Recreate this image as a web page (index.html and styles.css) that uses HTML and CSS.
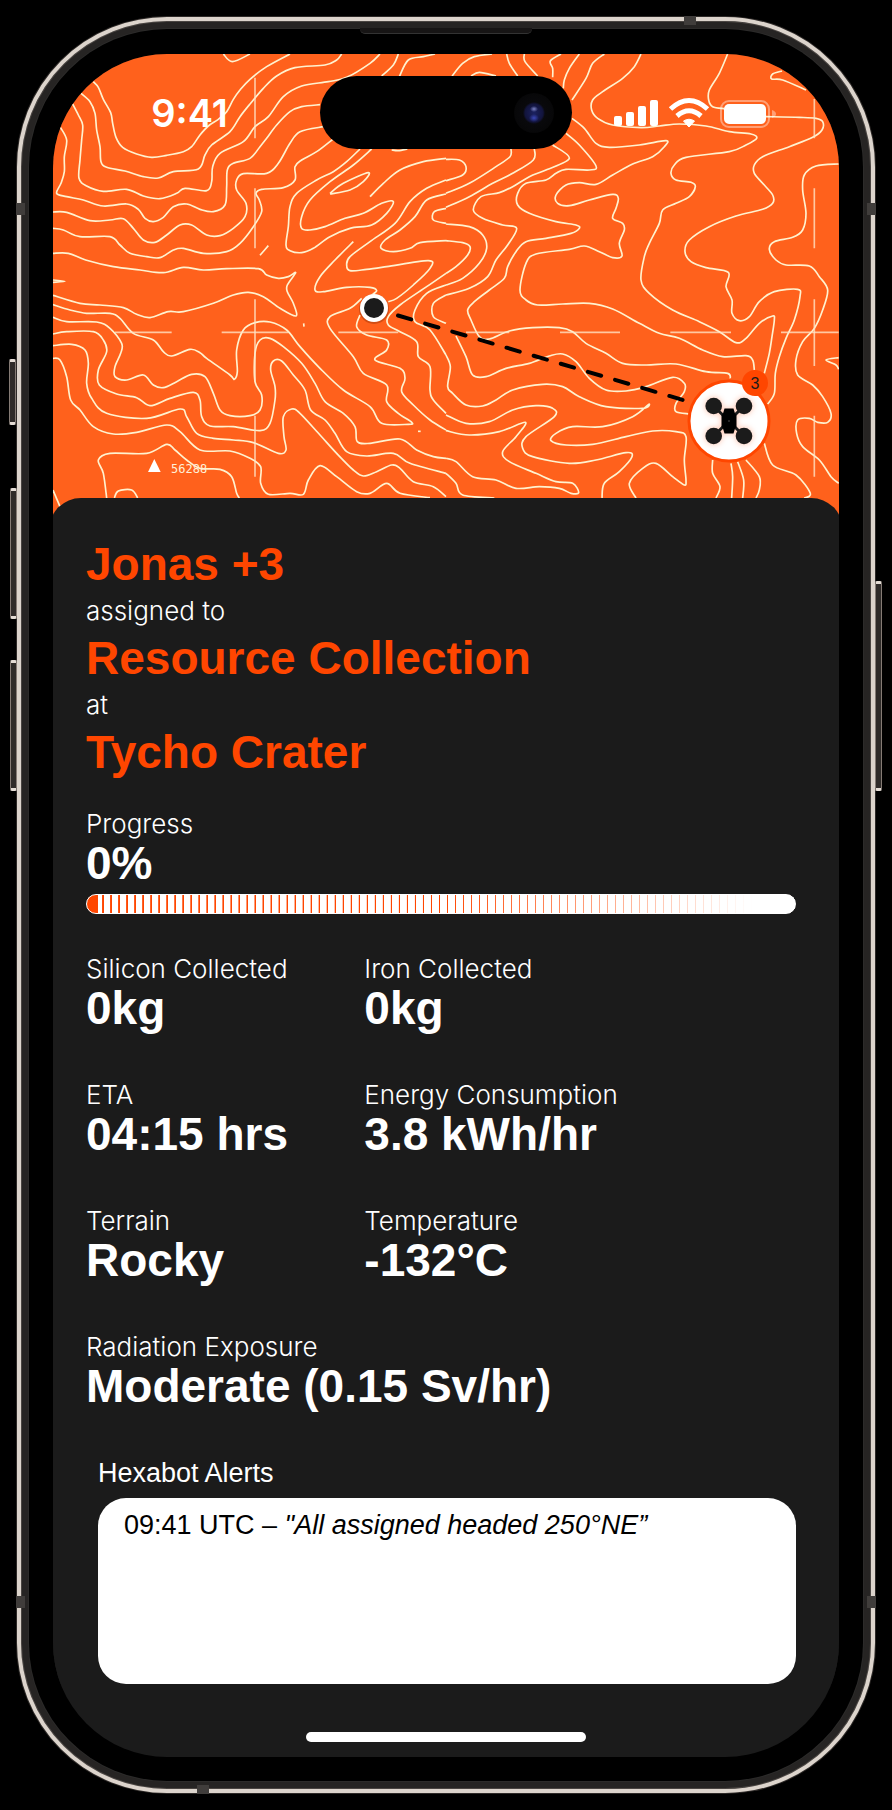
FILE: index.html
```html
<!DOCTYPE html>
<html lang="en">
<head>
<meta charset="utf-8">
<meta name="viewport" content="width=device-width, initial-scale=1">
<title>Hexabot mission</title>
<link rel="stylesheet" href="styles.css">
</head>
<body>
<div class="phone">
  <span class="key key-action"></span>
  <span class="key key-up"></span>
  <span class="key key-down"></span>
  <span class="key key-power"></span>
  <span class="seam seam-left-top"></span>
  <span class="seam seam-left-bottom"></span>
  <span class="seam seam-right-top"></span>
  <span class="seam seam-right-bottom"></span>
  <span class="seam seam-top"></span>
  <span class="seam seam-bottom"></span>
  <span class="speaker"></span>
  <div class="bezel">
    <main class="screen">
      <header class="status">
        <time class="clock">9:41</time>
        <div class="island"><span class="camera"></span></div>
        <svg class="signals" viewBox="613 96 164 34" role="img" aria-label="Signal, Wi-Fi and battery">
          <g fill="#fff">
            <rect x="614" y="116" width="8" height="10" rx="2"/>
            <rect x="626" y="112" width="8" height="14" rx="2"/>
            <rect x="638" y="106" width="8" height="20" rx="2"/>
            <rect x="650" y="100" width="8" height="26" rx="2"/>
            <path d="M689 127l-5.500-6q5.500-3.500 11 0z" stroke="#fff" stroke-linejoin="round"/>
            <rect x="724" y="104" width="42" height="20" rx="5"/>
          </g>
          <g fill="none" stroke="#fff" stroke-width="5">
            <path d="M670.500 109q18.500-17 37 0"/>
            <path d="M677 116q12-10.500 24 0"/>
          </g>
          <rect x="721" y="101" width="48" height="26" rx="8" fill="none" stroke="#fff" stroke-opacity=".4" stroke-width="2"/>
          <path d="M772 110q4 1.500 4 4t-4 4z" fill="#fff" fill-opacity=".4"/>
        </svg>
      </header>

      <svg class="map" viewBox="53 54 786 472" preserveAspectRatio="xMidYMin slice" role="img" aria-label="Contour map with route">
        <rect x="53" y="54" width="786" height="472" fill="#ff611c"/>
        <g id="contours" class="contours" transform="scale(.33333)"></g>
        <g class="grid" transform="scale(.33333)">
          <path d="M765 233V415M765 565V745M765 898V1145M765 1247V1430M2443 297V415M2443 565V745M2443 898V1098M2443 1247V1430"/>
          <path d="M345 997H515M665 997H865M1015 997H1195M1398 997H1528M1680 997H1860M2011 997H2193M2343 997H2516"/>
        </g>
        <path d="M154.300 459l6.400 13h-12.700z" fill="#fff"/>
        <text x="171" y="473" class="spot">56288</text>
        <path d="M398 315.500L683 400" stroke="#000" stroke-width="4" stroke-linecap="round" stroke-dasharray="13.800 14.500" fill="none"/>
        <circle cx="374" cy="309" r="15" fill="#a33a0c" opacity=".5"/>
        <circle cx="374" cy="308" r="14" fill="#fff"/>
        <circle cx="374" cy="308" r="10" fill="#1b1b1b"/>
        <circle cx="729" cy="421" r="40" fill="#fff" stroke="#ff4600" stroke-width="3"/>
        <g class="drone">
          <path d="M713.700 406L744 436M744 406L713.700 436" stroke="#1b1b1b" stroke-width="3"/>
          <g fill="#1b1b1b">
            <circle cx="713.700" cy="406" r="8.300"/><circle cx="744" cy="406" r="8.300"/>
            <circle cx="713.700" cy="436" r="8.300"/><circle cx="744" cy="436" r="8.300"/>
          </g>
          <path d="M724.500 408.500h9l1.500 5 1.500 2v11l-1.500 2-1.500 5h-9l-1.500-5-1.500-2v-11l1.500-2z" fill="#000"/>
          <circle cx="729" cy="421" r="1" fill="#333"/>
        </g>
        <circle cx="755" cy="383" r="13" fill="#ff4600"/>
        <text x="755" y="389" class="badge">3</text>
      </svg>

      <section class="panel">
        <h1 class="task">
          <span class="strong">Jonas +3</span>
          <span class="light">assigned to</span>
          <span class="strong">Resource Collection</span>
          <span class="light">at</span>
          <span class="strong">Tycho Crater</span>
        </h1>
        <div class="progress">
          <label class="label" for="progress">Progress</label>
          <output class="value" for="progress">0%</output>
          <progress id="progress" class="bar" value="0" max="100"></progress>
        </div>
        <dl class="metrics">
          <div><dt class="label">Silicon Collected</dt><dd class="value">0kg</dd></div>
          <div><dt class="label">Iron Collected</dt><dd class="value">0kg</dd></div>
          <div><dt class="label">ETA</dt><dd class="value">04:15 hrs</dd></div>
          <div><dt class="label">Energy Consumption</dt><dd class="value">3.8 kWh/hr</dd></div>
          <div><dt class="label">Terrain</dt><dd class="value">Rocky</dd></div>
          <div><dt class="label">Temperature</dt><dd class="value">-132°C</dd></div>
          <div class="wide"><dt class="label">Radiation Exposure</dt><dd class="value">Moderate (0.15 Sv/hr)</dd></div>
        </dl>
        <section class="alerts">
          <h2 class="alerts-title">Hexabot Alerts</h2>
          <div class="alerts-box">
            <p class="alert">09:41 UTC – <em>"All assigned headed 250°NE”</em></p>
          </div>
        </section>
      </section>
      <div class="home"></div>
    </main>
  </div>
</div>
<script src="map.js"></script>
</body>
</html>
```
FILE: styles.css
```css
* { box-sizing: border-box; margin: 0; padding: 0; }

body {
  min-height: 100vh;
  padding: 17px;
  background: #000;
  color: #fff;
  font-family: "Liberation Sans", Arial, sans-serif;
}

.phone {
  position: relative;
  border: 4px solid #dcd4cc;
  border-radius: 150px;
  background: #262423;
  padding: 8px;
  box-shadow: 0 0 0 1px #2e2a28, inset 0 0 0 1px #4a4542;
}
.bezel {
  border-radius: 138px;
  background: #000;
  padding: 25px 24px 24px;
  box-shadow: 0 0 0 1px #2c2b2a;
}
.screen {
  position: relative;
  overflow: hidden;
  border-radius: 114px;
  background: #1b1b1b;
}

.key {
  position: absolute;
  width: 7px;
  border: 1px solid #857b75;
  border-top: 3px solid #e4dcd5;
  border-bottom: 3px solid #e4dcd5;
  border-radius: 2px;
  background: #2f2b29;
}
.key-action { left: -12px; top: 338px; height: 66px; }
.key-up { left: -11px; top: 467px; height: 131px; }
.key-down { left: -11px; top: 639px; height: 131px; }
.key-power { right: -11px; top: 560px; height: 210px; }

.seam { position: absolute; background: #403d3b; }
.seam-left-top, .seam-left-bottom, .seam-right-top, .seam-right-bottom { width: 9px; height: 12px; }
.seam-left-top, .seam-left-bottom { left: -5px; }
.seam-right-top, .seam-right-bottom { right: -5px; }
.seam-left-top, .seam-right-top { top: 182px; }
.seam-left-bottom, .seam-right-bottom { bottom: 181px; }
.seam-top, .seam-bottom { width: 12px; height: 9px; }
.seam-top { top: -5px; right: 175px; }
.seam-bottom { bottom: -5px; left: 176px; }
.speaker {
  position: absolute;
  z-index: 1;
  top: 7px;
  left: 50%;
  width: 172px;
  height: 6px;
  margin-left: -86px;
  border-bottom: 1px solid #333;
  border-radius: 0 0 5px 5px;
  background: #171515;
}

.status {
  position: absolute;
  z-index: 1;
  top: 22px;
  left: 0;
  right: 0;
  display: grid;
  grid-template-columns: 1fr 252px 1fr;
  align-items: center;
}
.clock {
  justify-self: center;
  padding-left: 6px;
  font: 600 38px/44px Inter, sans-serif;
}
.island {
  display: flex;
  align-items: center;
  justify-content: flex-end;
  height: 73px;
  padding-right: 18px;
  border-radius: 37px;
  background: #000;
}
.camera {
  width: 40px;
  height: 40px;
  border-radius: 50%;
  background:
    radial-gradient(ellipse 4px 3px at 20px 16px, #7c83c4, transparent),
    radial-gradient(ellipse 5px 4px at 20px 25px, #3a46b8, transparent),
    radial-gradient(circle at 50% 50%, #1b2160 0, #12143c 9px, #09090c 11px, #070708 20px);
}
.signals { justify-self: start; width: 164px; height: 34px; margin-left: 41px; }

.map { display: block; width: 100%; height: 472px; }
.contours { fill: none; stroke: #fff2cf; stroke-width: 5; stroke-linejoin: round; }
.grid { fill: none; stroke: #ffe2c4; stroke-width: 5; stroke-opacity: .8; }
.spot { font: 12px "DejaVu Sans Mono", monospace; fill: #fff0d8; }
.badge { font: 16px "Liberation Sans", sans-serif; fill: #1b1b1b; text-anchor: middle; }
.drone { filter: drop-shadow(0 0 3px rgba(255, 70, 0, .35)); }

.panel {
  position: relative;
  margin: -28px -4px 0;
  padding: 39px 47px 0 37px;
  border-radius: 32px 32px 0 0;
  background: #1b1b1b;
}
.task { display: flex; flex-direction: column; font-size: 46px; }
.strong { color: #ff4600; font-size: 46px; line-height: 54px; }
.light { font: 300 26px/40px Inter, sans-serif; }
.label { display: block; font: 300 26px/38px Inter, sans-serif; }
.value { display: block; font-size: 46px; font-weight: 700; line-height: 40px; }

.progress { display: flex; flex-direction: column; padding-top: 26px; }
.bar {
  appearance: none;
  display: block;
  width: 100%;
  height: 20px;
  margin-top: 11px;
  border: 1px solid #fff;
  border-radius: 10px;
  background:
    linear-gradient(90deg, #ff4600 11px, #fff 11px 14px, transparent 14px),
    linear-gradient(90deg, transparent 50%, #fff 94%),
    repeating-linear-gradient(90deg, #ff4600 0 1px, transparent 1px 8px),
    linear-gradient(90deg, transparent, #fff 50%),
    repeating-linear-gradient(90deg, #fff 0 7px, #ff4600 7px 8px);
}
.bar::-webkit-progress-bar, .bar::-webkit-progress-value { background: transparent; }

.metrics {
  display: grid;
  grid-template-columns: 49fr 76fr;
  row-gap: 48px;
  margin-top: 36px;
}
.wide { grid-column: 1 / -1; }

.alerts { padding: 49px 0 0 12px; }
.alerts-title { font-size: 27px; font-weight: 400; line-height: 36px; }
.alerts-box {
  min-height: 186px;
  margin-top: 7px;
  padding: 9px 26px;
  border-radius: 28px;
  background: #fff;
  color: #000;
}
.alert { font-size: 27px; line-height: 36px; }

.home {
  width: 280px;
  height: 10px;
  margin: 48px auto 15px;
  border-radius: 5px;
  background: #fff;
}
```
FILE: map.js
```js
// Contour points, grouped by map tile. Each tile has its origin on the map.
const tiles = [
  { origin: [0, 0], lines: [
    "670,162 697,185 750,162",
    "280,245 295,262 310,298 332,338 338,370 348,412 368,442 410,462 455,472 500,466 550,455 575,440 600,405 625,378 655,358 680,335 700,298 720,270 750,238 800,200 870,162",
    "243,280 270,305 285,340 290,390 300,440 303,485 320,502 375,513 430,530 475,534 520,515 595,507 615,465 635,435 690,395 720,350 750,312 790,265 830,228 885,203 975,195 1010,180 1025,162",
    "218,312 235,345 248,375 245,420 240,480 237,535 260,558 310,574 380,568 430,588 480,596 530,580 555,565 620,572 635,545 638,500 660,460 730,425 765,380 805,350 850,290 905,258 985,245 1040,232 1110,190 1140,162",
    "181,382 200,420 193,470 193,515 183,550 170,580 200,590 250,600 310,618 380,612 415,628 435,655 460,665 490,652 520,620 560,612 600,628 640,635 675,615 680,560 682,510 700,490 750,475 780,440 800,415 830,375 870,335 905,320 960,314",
    "159,636 200,637 270,662 330,660 370,656 400,685 430,720 465,727 500,705 540,675 575,675 620,705 660,707 700,685 735,650 738,610 710,570 710,540 730,521 800,520 835,490 870,430 900,395 970,380",
    "159,685 190,690 240,710 330,710 360,735 390,760 440,770 480,773 520,750 550,745 610,760 680,755 720,730 760,680 785,635 778,600 768,580 785,568 850,563 885,540 885,500 905,480 950,455 998,418",
    "780,766 805,737",
    "1080,447 1040,485 1000,515 950,540 890,580 870,620 865,680 858,735 870,752 905,758 940,745 990,710 1050,685 1115,675 1160,640 1180,605 1145,610 1090,640 1035,655 975,680 930,690 905,685 905,650 930,600 990,545 1060,495 1115,447",
    "990,580 1030,550 1105,518 1090,545 1050,570 990,582",
    "1145,228 1180,195 1195,162", "1198,230 1225,180 1270,170 1305,162",
    "1338,475 1270,485 1200,510 1150,550 1110,590",
    "1338,540 1280,565 1230,605 1185,670 1110,725 1050,770 1040,795 1050,812 1100,808 1160,800 1285,782 1290,805 1240,855 1190,895 1165,905",
    "1338,582 1280,600 1245,650 1200,690 1155,720 1143,745 1180,755 1230,745 1260,728 1338,722",
    "1338,625 1303,635 1300,660 1338,670", "1175,450 1195,452 1222,447"
  ] },
  { origin: [1338, 0], lines: [
    "18,228 50,190 85,170 138,162", "75,228 100,217 150,228", "182,162 190,190 215,228",
    "235,162 237,185 275,228", "345,162 313,183 320,205 320,232", "400,162 370,205 355,240 352,265",
    "475,162 440,190 420,235 378,300",
    "585,162 565,200 530,235 470,275 440,300 437,330 455,355 500,375 585,383 640,378 700,372 780,378 850,395 915,402 932,415 900,435 850,455 720,472 685,495 675,520 690,540 735,547 748,560 730,590 690,610 650,630 640,670 610,730 595,770 585,840 610,880 680,930 760,965 820,995 870,1028 900,1015 940,970 980,948 985,960 978,1010 970,1060 955,1120",
    "845,162 820,220 790,270 788,300 800,320 835,326",
    "960,350 1060,352 1110,355 1130,365 1128,390 1100,412 1030,440 950,470 925,495 925,520 950,550 980,585 980,610 950,628 870,648 790,680 730,720 717,755 735,785 780,803 847,817 840,860 858,900 858,940 880,962 910,950 940,905 985,875 1055,868 1062,890 1045,960 1020,1015 1000,1070 988,1120 985,1180 965,1212",
    "1008,213 980,222 977,237 1010,240 1080,270",
    "1178,492 1110,498 1075,525 1070,570 1080,640 1070,690 1040,712 985,725 970,748 990,780 1020,795 1090,798 1120,830 1145,870 1130,930 1105,985 1070,1025 1050,1080 1055,1125 1100,1155 1130,1190 1155,1240 1145,1267 1115,1267 1090,1255 1055,1260 1052,1300 1070,1340 1120,1380 1155,1430 1178,1450",
    "378,355 415,385 450,430 490,442 580,435 660,422 655,440 620,470 560,492 500,525 450,553 400,548 360,555 330,585 335,610 370,617 430,600 500,583 517,595 510,625 500,655 530,670 535,690 520,730 528,768 500,773 460,755 415,738 370,748 270,762 240,790 222,870 240,900 275,915 350,912 430,910 500,927 580,970 640,1000 700,1015 770,1050 830,1070 900,1067 920,1080 925,1110",
    "360,400 400,435 450,498 430,510 360,508 330,520 300,540 240,550 215,580 215,615 250,640 330,665 390,675 400,685 375,700 300,715 240,725 210,755 185,800 175,835 130,870 85,905 65,930 75,960 100,1010 130,1017 190,993 260,983 340,983 380,995 420,1030 480,1060 530,1090 600,1095 690,1092 780,1115 845,1120 853,1135",
    "320,435 370,475 300,510 250,530 200,560 160,578 105,590 82,630 110,655 170,675 212,685 185,735 150,780 125,830 70,865 0,885",
    "265,447 262,480 200,520 140,550 70,590 0,622", "0,672 70,680 110,705 122,745 100,790 50,835 0,855",
    "195,447 192,470 150,500 70,550 0,580", "0,722 50,728 72,740 65,765 30,800 0,820", "0,478 40,480 60,500 50,525 0,542"
  ] },
  { origin: [0, 780], lines: [
    "159,-20 205,-20 257,0 340,20 420,30 490,38 550,22 610,30 680,26 775,26 800,45 835,55 865,50 887,38 862,75 862,95 880,130 888,168 840,145 790,110 745,97 700,105 640,130 550,155 505,155 450,173 410,163 370,143 300,135 240,130 159,106",
    "159,60 195,64 159,67",
    "159,134 210,150 260,160 330,160 360,175 400,220 460,240 490,275 515,288 570,268 600,278 620,295 690,345 703,358 712,335 710,270 730,210 765,188 810,186 860,210 900,260 960,325 1030,390 1110,440 1145,490 1225,493 1235,487 1195,460 1160,425 1160,375 1090,340 1060,290 990,205 990,170 1050,145 1085,115",
    "159,172 200,185 290,186 330,205 365,250 362,280 345,320 345,350 380,360 430,345 460,375 490,383 530,365 575,343 615,350 640,400 660,450 690,467 750,467 780,450 785,405 765,365 765,280 780,240 810,235 850,260 905,310 945,370 975,425 1030,460 1065,500 1072,545 1110,550 1200,537 1250,570 1300,590 1338,595",
    "159,222 200,215 280,215 310,240 320,275 295,330 298,375 350,402 410,413 450,437 510,415 580,397 600,420 605,470 630,498 700,500 780,512 810,490 825,420 825,380 812,330 820,303 845,303 880,345 915,390 932,450 975,480 1005,520 1040,575 1100,588 1180,580 1230,610 1338,640",
    "159,257 215,253 255,270 265,310 260,370 275,415 320,460 440,475 540,447 560,470 590,520 640,535 700,540 760,548 835,580 858,570 852,530 850,470 875,447 900,460 960,525 1010,580 1060,630 1090,648 1130,635 1175,615 1200,625 1240,665 1300,680 1338,710",
    "159,295 180,300 200,350 212,420 240,450 280,500 340,522 410,517 500,495 540,515 600,570 690,573 750,595 782,620 782,670 805,703 870,700 910,703 925,660 960,617 1010,650 1070,695 1110,700 1160,670 1200,700 1290,713",
    "320,714 310,640 295,600 330,580 440,580 500,553 525,570 560,600 600,625 660,628 695,650 710,700 718,714",
    "343,714 355,693 395,690 413,714", "159,690 180,740",
    "1060,-55 1005,0 960,50 945,90 970,95 1040,82 1110,82 1130,92 1115,105",
    "1338,40 1280,80 1200,135 1165,170 1165,195 1200,215 1250,245 1255,290 1290,320 1290,390 1300,420 1338,460",
    "1338,75 1280,100 1245,150 1245,185 1290,210 1338,285", "1338,105 1300,130 1300,170 1338,190",
    "1080,165 1070,200 1100,225 1160,240 1160,270 1125,300 1200,325 1215,355 1205,395 1240,435 1290,480 1338,510",
    "911,190 912,200", "1254,514 1262,514"
  ] },
  { origin: [1338, 780], lines: [
    "0,285 13,320 5,380 20,400 60,435 110,438 150,420 200,390 290,373 350,380 400,410 480,440 590,445 608,433 560,470 470,500 380,500 330,520 315,542 360,555 440,553 540,530 620,513 690,515 720,530 715,600 720,660 715,675 680,650 630,610 590,625 550,670 570,714",
    "30,228 60,290 80,345 120,350 180,325 250,310 310,288 350,282 390,305 430,355 480,390 540,393 600,380 680,352 715,370 715,395 690,430 690,455 730,462",
    "0,465 60,490 130,485 200,450 270,437 320,445 325,470 240,530 230,565 260,590 370,610 450,600 540,578 558,590 520,635 475,670 468,714",
    "0,512 70,525 160,515 238,487 210,530 170,575 190,605 270,640 330,665 380,670 398,698 375,700 340,685 280,680 210,685 150,660 80,650 30,605 0,595",
    "0,640 30,670 50,705 145,714", "800,600 800,640 822,680 810,714", "855,610 860,650 857,714",
    "875,605 893,660 890,714", "900,600 940,650 940,690 930,714", "955,550 980,615 1050,645 1093,700 1075,714",
    "1178,293 1140,300 1170,315 1178,328"
  ] }
];

// Smooth curve through every point.
function curve(points) {
  let d = "M" + points[0];
  for (let i = 0; i < points.length - 1; i++) {
    const a = points[i - 1] || points[i];
    const b = points[i];
    const c = points[i + 1];
    const e = points[i + 2] || c;
    const p = [b[0] + (c[0] - a[0]) / 6, b[1] + (c[1] - a[1]) / 6];
    const q = [c[0] - (e[0] - b[0]) / 6, c[1] - (e[1] - b[1]) / 6];
    d += "C" + p + " " + q + " " + c;
  }
  return d;
}

const layer = document.getElementById("contours");
for (const tile of tiles) {
  for (const line of tile.lines) {
    const points = line.split(" ").map(pair => {
      const [x, y] = pair.split(",").map(Number);
      return [x + tile.origin[0], y + tile.origin[1]];
    });
    const path = document.createElementNS("http://www.w3.org/2000/svg", "path");
    path.setAttribute("d", curve(points));
    layer.append(path);
  }
}
```
